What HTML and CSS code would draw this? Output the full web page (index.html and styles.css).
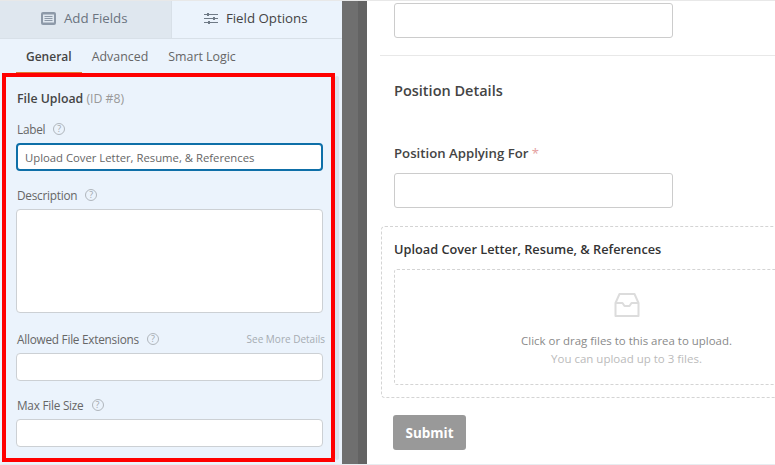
FILE: index.html
```html
<!DOCTYPE html>
<html lang="en">
<head>
  <meta charset="UTF-8">
  <meta name="viewport" content="width=device-width, initial-scale=1.0">
  <title>Form Builder - File Upload</title>
  <link rel="stylesheet" href="styles.css">
</head>
<body>
  <div class="builder">
    <aside class="sidebar">
      <div class="main-tabs">
        <div class="main-tab">
          <svg class="tab-icon" width="15" height="13" viewBox="0 0 15 13"><rect width="15" height="13" rx="2" fill="#8d99a8"/><rect x="2" y="2.5" width="11" height="8" fill="#dfe7ef"/><path d="M3.5 4.5h8M3.5 6.5h8M3.5 8.5h8" stroke="#8d99a8" stroke-width="1"/></svg>
          Add Fields
        </div>
        <div class="main-tab active">
          <svg class="tab-icon" width="14" height="13" viewBox="0 0 14 13"><path d="M0 2.5h14M0 6.5h14M0 10.500h14" stroke="#6f7a86" stroke-width="1.2"/><rect x="3" y="1" width="2" height="3" fill="#6f7a86"/><rect x="9" y="5" width="2" height="3" fill="#6f7a86"/><rect x="4" y="9" width="2" height="3" fill="#6f7a86"/></svg>
          Field Options
        </div>
      </div>
      <div class="sub-tabs">
        <span class="sub-tab active">General</span>
        <span class="sub-tab">Advanced</span>
        <span class="sub-tab">Smart Logic</span>
      </div>
      <div class="options">
        <h3 class="field-title">File Upload <span>(ID #8)</span></h3>
        <div class="option-group">
          <label class="option-label">Label <i class="help">?</i></label>
          <input class="option-input focused" type="text" value="Upload Cover Letter, Resume, &amp; References">
        </div>
        <div class="option-group">
          <label class="option-label">Description <i class="help">?</i></label>
          <textarea class="option-input option-area"></textarea>
        </div>
        <div class="option-group">
          <label class="option-label">Allowed File Extensions <i class="help">?</i><a class="more-link">See More Details</a></label>
          <input class="option-input" type="text">
        </div>
        <div class="option-group">
          <label class="option-label">Max File Size <i class="help">?</i></label>
          <input class="option-input" type="text">
        </div>
      </div>
      <div class="scroll-thumb"></div>
      <div class="highlight"></div>
    </aside>

    <div class="gutter"></div>

    <main class="preview">
      <div class="preview-field first">
        <input class="preview-input" type="text">
      </div>
      <hr class="divider">
      <h2 class="section-title">Position Details</h2>
      <div class="preview-field">
        <label class="preview-label">Position Applying For <span class="req">*</span></label>
        <input class="preview-input" type="text">
      </div>
      <div class="upload-field">
        <div class="upload-title">Upload Cover Letter, Resume, &amp; References</div>
        <div class="dropzone">
          <svg width="26" height="26" viewBox="0 0 26 26" fill="none" stroke="#dcdcdc" stroke-width="2" stroke-linejoin="round"><path d="M1.500 11 5.500 2h15l4 9v13h-23z"/><path d="M1.500 11h7l2 3h5l2-3h7"/></svg>
          <p class="drop-main">Click or drag files to this area to upload.</p>
          <p class="drop-sub">You can upload up to 3 files.</p>
        </div>
      </div>
      <button class="submit-btn" type="button">Submit</button>
    </main>
  </div>
</body>
</html>
```

FILE: styles.css
```css
* {
  box-sizing: border-box;
  margin: 0;
  padding: 0;
}

html, body {
  height: 100%;
  overflow: hidden;
}

body {
  font-family: "Open Sans", "Noto Sans", sans-serif;
  background-color: #fff;
  color: #444;
}

.builder {
  display: flex;
  height: 465px;
  border-top: 1px solid #e8e8e8;
  border-bottom: 1px solid #e8ecf0;
}

/* Left panel */
.sidebar {
  position: relative;
  width: 342px;
  flex-shrink: 0;
  background-color: #ebf3fc;
}

.main-tabs {
  display: flex;
  height: 38px;
  border-bottom: 1px solid #d8e0e8;
}

.main-tab {
  flex: 1;
  display: flex;
  align-items: center;
  justify-content: center;
  gap: 8px;
  padding: 0 2px 3px 0;
  font-size: 13.300px;
  color: #6b7480;
  background-color: #dfe7ef;
}

.main-tab.active {
  color: #444;
  background-color: #ebf3fc;
  border-left: 1px solid #d8e0e8;
}

.sub-tabs {
  display: flex;
  height: 35px;
  padding-left: 16px;
}

.sub-tab {
  padding: 9px 10px 0;
  font-size: 12.400px;
  color: #666;
}

.sub-tab.active {
  color: #444;
  font-size: 12px;
  font-weight: 600;
  border-bottom: 2px solid #e27730;
}

.options {
  padding: 16px 19px 0 16px;
}

.field-title {
  margin-bottom: 12px;
  padding-left: 1px;
  font-size: 12.300px;
  line-height: 18px;
  font-weight: 600;
  color: #444;
}

.field-title span {
  font-weight: 400;
  color: #999;
}

.option-group {
  margin-bottom: 15px;
}

.option-label {
  display: flex;
  align-items: center;
  height: 18px;
  margin-bottom: 5px;
  padding-left: 1px;
  font-size: 11.800px;
  letter-spacing: -0.250px;
  color: #666;
}

.help {
  display: inline-block;
  width: 12px;
  height: 12px;
  margin-left: 8px;
  border: 1px solid #b0b6bc;
  border-radius: 50%;
  font-size: 9px;
  font-style: normal;
  letter-spacing: 0;
  line-height: 10px;
  text-align: center;
  color: #a0a6ac;
}

.more-link {
  margin-left: auto;
  margin-right: -2px;
  font-size: 10px;
  letter-spacing: 0;
  color: #a6acb2;
}

.option-input {
  display: block;
  width: 100%;
  height: 28px;
  padding: 0 7px;
  border: 1px solid #ccd0d4;
  border-radius: 4px;
  background-color: #fff;
  font-family: inherit;
  font-size: 11.300px;
  color: #666;
}

.option-input.focused {
  border: 2px solid #0e6fa8;
}

.option-area {
  height: 104px;
  margin-bottom: 17px;
  resize: none;
}

.scroll-thumb {
  position: absolute;
  left: 335px;
  top: 75px;
  width: 4px;
  height: 384px;
  border-radius: 2px;
  background-color: #dbe2ea;
}

.highlight {
  position: absolute;
  left: 2px;
  top: 72px;
  width: 333px;
  height: 389px;
  border: 4px solid #f00;
}

/* Dimmed strip between the panels */
.gutter {
  width: 25px;
  flex-shrink: 0;
  background: linear-gradient(to right, #6f6f6f 16px, #636363 16px);
}

/* Form preview */
.preview {
  flex: 1;
  min-width: 0;
  overflow: hidden;
}

.preview-field {
  padding-left: 27px;
  margin-bottom: 18px;
}

.preview-field.first {
  padding-top: 2px;
  margin-bottom: 17px;
}

.preview-input {
  display: block;
  width: 279px;
  height: 35px;
  border: 1px solid #ccc;
  border-radius: 3px;
  background-color: #fff;
}

.divider {
  margin-left: 13px;
  border: 0;
  border-top: 1px solid #e8e8e8;
}

.section-title {
  margin: 25px 0 43px 27px;
  font-size: 14.500px;
  line-height: 20px;
  font-weight: 600;
  color: #444;
}

.preview-label {
  display: block;
  margin-bottom: 11px;
  font-size: 13.200px;
  line-height: 18px;
  font-weight: 600;
  color: #444;
}

.req {
  font-weight: 400;
  color: #e4a0a0;
}

.upload-field {
  width: 490px;
  height: 172px;
  margin-left: 14px;
  padding: 13px 12px 0;
  border: 1px dashed #d4d4d4;
  border-radius: 4px;
}

.upload-title {
  margin-bottom: 11px;
  font-size: 12.750px;
  line-height: 18px;
  font-weight: 600;
  color: #333;
}

.dropzone {
  display: flex;
  flex-direction: column;
  align-items: center;
  height: 116px;
  width: 465px;
  padding-top: 22px;
  border: 1px dashed #d4d4d4;
  border-radius: 3px;
}

.drop-main {
  margin-top: 14px;
  font-size: 11.450px;
  line-height: 18px;
  color: #8a8a8a;
}

.drop-sub {
  font-size: 11.500px;
  line-height: 18px;
  color: #bbb;
}

.submit-btn {
  display: block;
  width: 73px;
  height: 35px;
  margin: 17px 0 0 26px;
  border: 0;
  border-radius: 3px;
  background-color: #999;
  font-family: inherit;
  font-size: 13.500px;
  font-weight: 700;
  color: #fff;
}
```
